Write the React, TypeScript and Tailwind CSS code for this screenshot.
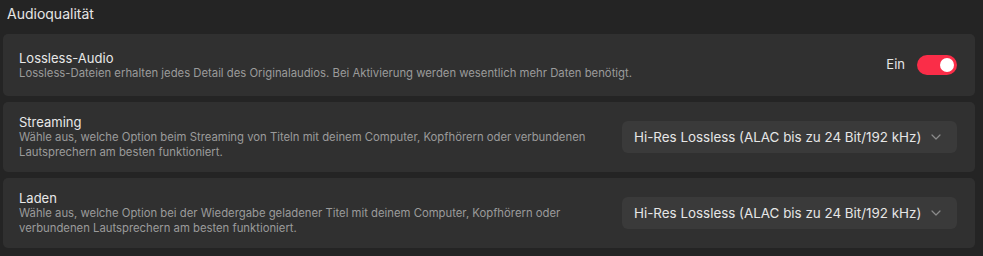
import React from 'react';

const Chevron = () => (
    <svg width="10" height="6" viewBox="0 0 10 6" fill="none" className="flex-shrink-0">
        <path d="M1 1l4 4 4-4" stroke="#8a8a8a" strokeWidth="1.2" strokeLinecap="round" strokeLinejoin="round" />
    </svg>
);

const Select = ({ value }: { value: string }) => (
    <div className="w-[335px] h-8 flex items-center justify-between pl-3 pr-4 rounded-md bg-[#3a3a3a] flex-shrink-0">
        <span className="text-[13.4px] text-[#e6e6e6] whitespace-nowrap">{value}</span>
        <Chevron />
    </div>
);

interface RowProps {
    title: string;
    description: React.ReactNode;
    children: React.ReactNode;
    className?: string;
}

const Row: React.FC<RowProps> = ({ title, description, children, className }) => (
    <div className={`flex items-center justify-between rounded-[5px] bg-[#303030] pl-4 pr-[18px] ${className ?? ''}`}>
        <div className="flex flex-col">
            <span className="text-[13px] leading-4 text-[#e8e8e8]">{title}</span>
            <span className="text-[11.3px] leading-[15px] text-[#9b9b9b]">{description}</span>
        </div>
        {children}
    </div>
);

export default function App() {
    const quality = 'Hi-Res Lossless (ALAC bis zu 24 Bit/192 kHz)';
    return (
        <div className="w-[983px] h-[256px] bg-[#242424] px-[3px] pr-[8px] pt-[4px] font-['Inter',sans-serif] overflow-hidden">
            <h2 className="text-[14px] leading-5 text-[#e6e6e6] pl-1 mb-[10px]">Audioqualität</h2>
            <div className="flex flex-col gap-[6px]">
                <Row
                    title="Lossless-Audio"
                    description="Lossless-Dateien erhalten jedes Detail des Originalaudios. Bei Aktivierung werden wesentlich mehr Daten benötigt."
                    className="h-[62px]"
                >
                    <div className="flex items-center gap-3">
                        <span className="text-[13px] text-[#e6e6e6]">Ein</span>
                        <div className="w-10 h-5 rounded-full bg-[#fa2d48] flex items-center justify-end pr-[3px]">
                            <div className="w-[14px] h-[14px] rounded-full bg-white" />
                        </div>
                    </div>
                </Row>
                <Row
                    title="Streaming"
                    description={<>Wähle aus, welche Option beim Streaming von Titeln mit deinem Computer, Kopfhörern oder verbundenen<br />Lautsprechern am besten funktioniert.</>}
                    className="h-[70px]"
                >
                    <Select value={quality} />
                </Row>
                <Row
                    title="Laden"
                    description={<>Wähle aus, welche Option bei der Wiedergabe geladener Titel mit deinem Computer, Kopfhörern oder<br />verbundenen Lautsprechern am besten funktioniert.</>}
                    className="h-[70px]"
                >
                    <Select value={quality} />
                </Row>
            </div>
        </div>
    );
}
